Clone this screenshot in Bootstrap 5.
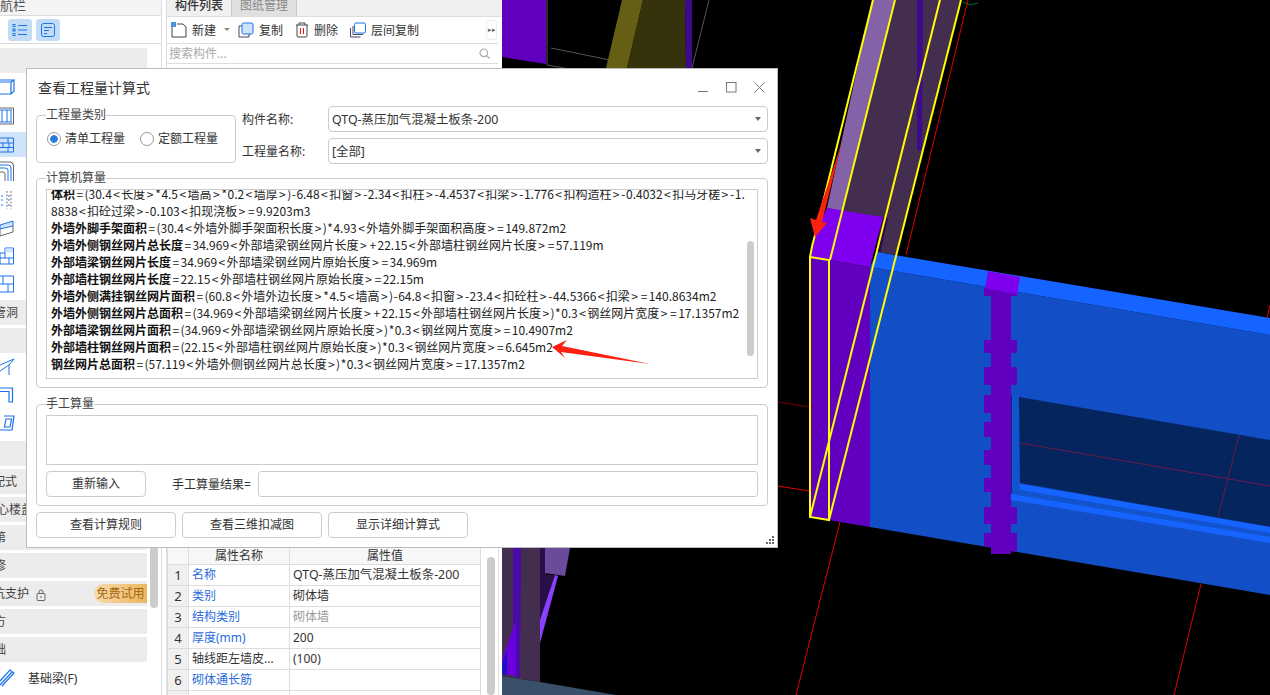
<!DOCTYPE html>
<html lang="zh-CN">
<head>
  <meta charset="UTF-8">
  <title>查看工程量计算式</title>
  <link href="https://cdn.jsdelivr.net/npm/bootstrap@5.3.0/dist/css/bootstrap.min.css" rel="stylesheet" />
  <style>
    html, body { height: 100%; }
    body { width: 1270px; height: 695px; overflow: hidden; background: #fff; color: #333; font: 12px/17px "Noto Sans", "Noto Sans CJK SC", sans-serif; position: relative; }

    /* left nav */
    .side-nav { width: 162px; height: 695px; border-right: 1px solid #ddd; overflow: hidden; flex: none; position: relative; }
    .nav-title { height: 16px; line-height: 10px; font-size: 13px; border-bottom: 1px solid #ddd; background: #f4f4f4; color: #555; overflow: hidden; }
    .nav-tools { height: 28px; border-bottom: 1px solid #ddd; padding: 3px 0 0 8px; gap: 4px; }
    .tool-on { width: 24px; height: 22px; background: #c3dcf5; border-radius: 3px; }
    .nav-list { width: 147px; padding-top: 4px; }
    .nav-group { height: 25px; line-height: 25px; background: #ececec; margin-bottom: 3px; white-space: nowrap; overflow: hidden; color: #444; position: relative; }
    .nav-item { height: 28px; display: flex; align-items: center; white-space: nowrap; }
    .nav-item.sel { background: #cfe4fb; height: 25px; margin: 2px 0 1px; }
    .nav-item svg { flex: none; }
    .item-label { margin-left: 13px; }
    .tight-1 { margin-bottom: 1px; }
    .tight-2 { margin-top: 2px; }
    .tight-3 { margin-bottom: 2px; }
    .cut-3 { margin-left: -3px; } .cut-6 { margin-left: -6px; } .cut-7 { margin-left: -7px; }
    .try-tag { position: absolute; right: 0; top: 3px; width: 53px; height: 19px; line-height: 19px; text-align: center; border-radius: 10px 0 0 10px; background: linear-gradient(90deg, #f7dcae, #edb660); color: #a5660f; }
    .nav-thumb { position: absolute; left: 150px; top: 400px; width: 8px; height: 208px; background: #ccc; border-radius: 4px; }

    /* component panel */
    .comp-panel { width: 336px; height: 695px; margin-left: 4px; flex: none; position: relative; border-left: 1px solid #ddd; }
    .comp-tabs { height: 17px; background: #f0f0f0; border-bottom: 1px solid #ddd; }
    .comp-tab { width: 65px; height: 16px; line-height: 12px; text-align: center; overflow: hidden; font-weight: 500; border-right: 1px solid #ccc; color: #333; }
    .comp-tab.off { background: #e0e0e0; color: #888; font-weight: 400; }
    .comp-tools { height: 27px; border-bottom: 1px solid #ddd; padding-left: 4px; width: 331px; position: relative; }
    .comp-tools span { margin-left: 5px; }
    .comp-more { position: absolute; left: 319px; top: 3px; width: 11px; height: 20px; border: 1px solid #eee; border-radius: 3px; color: #666; font-size: 7px; line-height: 18px; text-align: center; }
    .comp-search { height: 20px; width: 331px; border-bottom: 1px solid #ddd; color: #aaa; padding-left: 2px; line-height: 19px; }
    .comp-list { height: 482px; }
    .prop-table { width: 313px; margin: 0; table-layout: fixed; font-size: 12px; color: #333; border-color: #ddd; }
    .prop-table > :not(caption) > * > * { padding: 0 3px; height: 21px; line-height: 20px; box-shadow: none; white-space: nowrap; overflow: hidden; }
    .prop-table thead th { font-weight: 400; text-align: center; height: 18px; line-height: 16px; background: #f7f7f7; }
    .prop-table td.rn { background: #f0f0f0; text-align: center; font-size: 13px; }
    .prop-table td.pk { color: #2b6bdc; }
    .prop-table td.dim { color: #999; }
    .prop-table td.val-name { font-size: 12.4px; }
    .prop-thumb { position: absolute; left: 320px; top: 557px; width: 8px; height: 138px; background: #ccc; border-radius: 4px; }
    .panel-edge { position: absolute; left: 331px; top: 545px; width: 1px; height: 150px; background: #ddd; }

    .stage { width: 768px; height: 695px; flex: none; background: #000; display: block; }

    /* dialog */
    .calc-dlg { position: absolute; left: 26px; top: 68px; width: 752px; height: 480px; background: #fff; border: 1px solid #bbb; padding: 0 9px; }
    .dlg-head { height: 37px; padding-left: 2px; font-size: 14px; color: #333; }
    .win-btns { position: absolute; right: 12px; top: 13px; gap: 17px; }
    .calc-box { position: relative; border: 1px solid #ccc; border-radius: 4px; }
    .box-legend { position: absolute; left: 9px; top: -10px; background: #fff; line-height: 17px; padding: 0; color: #444; }
    .kind-box { width: 200px; height: 48px; margin-top: 9px; flex: none; padding: 0 0 0 10px; gap: 15px; }
    .radio-line { margin: 0; padding: 0; min-height: 0; gap: 4px; line-height: 16px; }
    .radio-line .form-check-input { float: none; margin: 0; width: 14px; height: 14px; border: 1px solid #999; background: #fff; box-shadow: none; flex: none; }
    .radio-line .form-check-input:checked { background: radial-gradient(circle, #2a7ae2 0 3.5px, #fff 4px); border-color: #999; }
    .radio-line label { color: #333; }
    .name-col { margin-left: 6px; flex: 1; gap: 6px; }
    .name-lab { width: 86px; flex: none; color: #333; }
    .dlg-select { height: 26px; padding: 1px 20px 0 3px; font-size: 12.4px; line-height: 24px; border: 1px solid #ccc; border-radius: 4px; color: #333; background-position: right 6px center; background-size: 6px 4px; background-image: url("data:image/svg+xml,%3Csvg xmlns='http://www.w3.org/2000/svg' viewBox='0 0 6 4'%3E%3Cpath d='M0 0h6L3 4z' fill='%23666'/%3E%3C/svg%3E"); font-family: inherit; box-shadow: none; }
    .auto-box { height: 210px; margin-top: 14px; padding: 10px 9px; }
    .formula-view { height: 190px; border: 1px solid #ccc; overflow: hidden; position: relative; padding: 0 4px; color: #222; white-space: nowrap; font-family: "Noto Sans CJK SC", sans-serif; }
    .formula-view p { margin: 0; height: 17px; line-height: 17px; }
    .formula-view p:first-child { margin-top: -5px; }
    .formula-view b { font-weight: 700; color: #111; }
    .sym-wide { margin: 0 1.4px; }
    .sym-thin { margin: 0 0.5px; }
    .formula-thumb { position: absolute; left: 700px; top: 51px; width: 7px; height: 115px; background: #ccc; border-radius: 4px; }
    .hand-box { height: 102px; margin-top: 16px; padding: 10px 9px; }
    .hand-area { height: 50px; border: 1px solid #ccc; border-radius: 0; resize: none; box-shadow: none; }
    .hand-row { margin-top: 6px; }
    .dlg-btn { height: 26px; padding: 0; flex: none; font-size: 12px; line-height: 24px; border: 1px solid #ccc; border-radius: 4px; background: #fff; color: #333; }
    .btn-reset { width: 100px; }
    .btn-foot { width: 140px; }
    .hand-lab { margin-left: 26px; width: 86px; flex: none; }
    .hand-input { height: 26px; padding: 0 4px; border: 1px solid #ccc; border-radius: 3px; box-shadow: none; font-size: 12px; }
    .foot-row { margin-top: 6px; gap: 6px; }
    .size-grip { position: absolute; right: 2px; bottom: 2px; }
    .mark-layer { position: absolute; left: 0; top: 0; pointer-events: none; }
  </style>
</head>
<body>
<div class="d-flex">

  <!-- left nav -->
  <aside class="side-nav">
    <div class="nav-title"><span>航栏</span></div>
    <div class="nav-tools d-flex">
      <div class="tool-on d-flex align-items-center justify-content-center">
        <svg width="16" height="14" viewBox="0 0 16 14" fill="none" stroke="#1a73e8"><path d="M6 2.5h9M6 7h9M6 11.5h9"/><rect x="1" y="1.5" width="2" height="2"/><rect x="1" y="6" width="2" height="2"/><rect x="1" y="10.5" width="2" height="2"/></svg>
      </div>
      <div class="tool-on d-flex align-items-center justify-content-center">
        <svg width="16" height="16" viewBox="0 0 16 16" fill="none" stroke="#1a73e8"><rect x="1.5" y="1.5" width="13" height="13" rx="2"/><path d="M4 5.5h8M4 8.5h5M4 11.5h3"/></svg>
      </div>
    </div>
    <div class="nav-list">
      <div class="nav-group tight-1"></div>
      <div class="nav-item"><svg width="15" height="20" viewBox="0 0 15 20" fill="none" stroke="#1a73e8" stroke-width="1.2"><path d="M0 4h11v12H0M11 4l3-2v11l-3 3M0 2h14"/></svg></div>
      <div class="nav-item"><svg width="15" height="20" viewBox="0 0 15 20" fill="none"><path d="M0 2h13.500v16H0" stroke="#666"/><path d="M2 4v12M7 4v12M11 4v12M0 4h12M0 16h12" stroke="#1a73e8"/></svg></div>
      <div class="nav-item sel"><svg width="15" height="20" viewBox="0 0 15 20" fill="none" stroke="#1a73e8"><path d="M0 3h13.500v14H0M0 8h13.500M0 12.500h13.500M8 3v5M3 8v4.500M9 8v4.500M8 12.500V17"/></svg></div>
      <div class="nav-item"><svg width="15" height="22" viewBox="0 0 15 22" fill="none"><path d="M0 1h10q3.500 0 3.500 4v15" stroke="#666"/><path d="M0 4h8q3 0 3 3v13M0 7h5q3 0 3 2v11" stroke="#1a73e8"/><path d="M0 11h3q2 0 2 2v7" stroke="#666"/></svg></div>
      <div class="nav-item"><svg width="15" height="20" viewBox="0 0 15 20" fill="none"><path d="M7 1v18M11 1v18" stroke="#777" stroke-dasharray="2 1.500"/><path d="M1 6h2M1 10h2M1 15h2M8 6h2M8 10h2M8 15h2" stroke="#1a73e8"/></svg></div>
      <div class="nav-item"><svg width="15" height="20" viewBox="0 0 15 20" fill="none"><path d="M0 7l13-4v5L0 11z" stroke="#1a73e8" fill="#cfe4fb"/><path d="M0 11v7l13-4V8" stroke="#666"/></svg></div>
      <div class="nav-item"><svg width="15" height="20" viewBox="0 0 15 20" fill="none" stroke="#1a73e8"><path d="M5 2h8.500v16H0V7h5zM0 12h13.500M5 7v5M9 12v6"/><rect x="5.500" y="2.500" width="7.500" height="4" fill="#cfe4fb" stroke="none"/></svg></div>
      <div class="nav-item"><svg width="15" height="20" viewBox="0 0 15 20" fill="none" stroke="#1a73e8"><path d="M0 2h13.500v16H0M0 10h13.500M8 10v8M3 2v8"/></svg></div>
      <div class="nav-group tight-2"><span class="cut-6 d-inline-block">管洞</span></div>
      <div class="nav-group mb-0"></div>
      <div class="nav-item"><svg width="15" height="20" viewBox="0 0 15 20" fill="none" stroke="#1a73e8"><path d="M0 8l14-6-5 6-9 6M9 8v10"/></svg></div>
      <div class="nav-item"><svg width="15" height="20" viewBox="0 0 15 20" fill="none" stroke="#1a73e8" stroke-width="1.200"><path d="M0 3h12.500v14H9V6.500H0"/></svg></div>
      <div class="nav-item"><svg width="15" height="20" viewBox="0 0 15 20" fill="none" stroke="#1a73e8" stroke-width="1.200"><path d="M4 3h10l-2 14H0M6 6l-1.500 8H10l1.500-8z"/></svg></div>
      <div class="nav-group tight-2 mt-1"></div>
      <div class="nav-group"><span class="cut-7 d-inline-block">配式</span></div>
      <div class="nav-group"><span class="cut-3 d-inline-block">心楼盖</span></div>
      <div class="nav-group"><span class="cut-6 d-inline-block">第</span></div>
      <div class="nav-group"><span class="cut-6 d-inline-block">修</span></div>
      <div class="nav-group"><span class="cut-7 d-inline-block">坑支护</span>
        <svg width="10" height="12" viewBox="0 0 10 12" fill="none" stroke="#666" class="ms-1"><rect x="1" y="4.500" width="8" height="7" rx="1"/><path d="M3 4.500V3a2 2 0 0 1 4 0v1.500M5 7v2"/></svg>
        <div class="try-tag">免费试用</div>
      </div>
      <div class="nav-group"><span class="cut-6 d-inline-block">方</span></div>
      <div class="nav-group tight-3"><span class="cut-6 d-inline-block">础</span></div>
      <div class="nav-item"><svg width="15" height="20" viewBox="0 0 15 20" fill="none" stroke="#1a73e8" stroke-width="1.200"><path d="M0 13L10 2l4 3L2 18M0 17L12 4"/></svg><span class="item-label">基础梁(F)</span></div>
    </div>
    <div class="nav-thumb"></div>
  </aside>

  <!-- component list + properties -->
  <section class="comp-panel">
    <div class="comp-tabs d-flex">
      <div class="comp-tab">构件列表</div>
      <div class="comp-tab off">图纸管理</div>
    </div>
    <div class="comp-tools d-flex align-items-center">
      <svg width="16" height="16" viewBox="0 0 16 16" fill="none" stroke="#444"><path d="M1 3v12h14V5l-3-3H6"/><rect x="0" y="0" width="5" height="5" fill="#4a90e2" stroke="none"/></svg>
      <span>新建</span>
      <svg class="ms-2" width="6" height="4" viewBox="0 0 6 4"><path d="M0 0h6L3 3z" fill="#888"/></svg>
      <svg class="ms-2" width="16" height="16" viewBox="0 0 16 16" fill="none" stroke="#446"><path d="M4 4H1v11h10v-3"/><rect x="4" y="1" width="11" height="11" rx="1.500" fill="#cfe4fb" stroke="#1a73e8"/></svg>
      <span>复制</span>
      <svg class="ms-2 ps-1" width="18" height="16" viewBox="0 0 14 16" fill="none" stroke="#444"><path d="M1 3h12M4 3V1h6v2M2 3v11q0 1 1 1h8q1 0 1-1V3"/><path d="M5.500 6v6M8.500 6v6" stroke="#e01010"/></svg>
      <span>删除</span>
      <svg class="ms-2 ps-1" width="20" height="16" viewBox="0 0 16 16" fill="none" stroke="#446"><path d="M0.500 6v9h10M3 4v8.500h10"/><rect x="4.500" y="1" width="11" height="10" rx="1.500" stroke="#1a73e8" fill="#fff"/></svg>
      <span>层间复制</span>
      <div class="comp-more">▸▸</div>
    </div>
    <div class="comp-search d-flex justify-content-between pe-2 align-items-center">
      <span>搜索构件...</span>
      <svg width="11" height="11" viewBox="0 0 11 11" fill="none" stroke="#aaa" stroke-width="1.200"><circle cx="4.800" cy="4.800" r="3.800"/><path d="M7.500 7.500L10.500 10.500"/></svg>
    </div>
    <div class="comp-list"></div>
    <table class="table table-bordered prop-table">
      <colgroup><col width="21"><col width="101"><col width="191"></colgroup>
      <thead><tr><th></th><th>属性名称</th><th>属性值</th></tr></thead>
      <tbody>
        <tr><td class="rn">1</td><td class="pk">名称</td><td class="val-name">QTQ-蒸压加气混凝土板条-200</td></tr>
        <tr><td class="rn">2</td><td class="pk">类别</td><td>砌体墙</td></tr>
        <tr><td class="rn">3</td><td class="pk">结构类别</td><td class="dim">砌体墙</td></tr>
        <tr><td class="rn">4</td><td class="pk">厚度(mm)</td><td>200</td></tr>
        <tr><td class="rn">5</td><td>轴线距左墙皮...</td><td>(100)</td></tr>
        <tr><td class="rn">6</td><td class="pk">砌体通长筋</td><td></td></tr>
        <tr><td class="rn"></td><td></td><td></td></tr>
      </tbody>
    </table>
    <div class="prop-thumb"></div>
    <div class="panel-edge"></div>
  </section>

  <!-- 3D view -->
  <svg class="stage" viewBox="502 0 768 695" xmlns="http://www.w3.org/2000/svg">
    <rect x="502" width="768" height="695" fill="#000"/>
    <polygon points="502,0 546,0 546,64 502,57" fill="#6200c0"/>
    <path d="M547 0V65L575 70M551 48L610 60M709 0L692 68" stroke="#555" fill="none"/>
    <polygon points="622,0 643,0 627,68 606,68" fill="#645f14"/>
    <polygon points="643,0 685,0 686,68 627,68" fill="#36330c"/>
    <polygon points="685,0 692,0 692,68 686,68" fill="#3d0a8c"/>

    <path d="M968 0L906 255" stroke="#e00000" fill="none"/>
    <path d="M963 2L970 5L978 3" stroke="#0a6a2a" fill="none"/>
    <polygon points="872,0 895,0 842,211 827,208" fill="#8462a8"/>
    <polygon points="895,0 960,0 897,255 876,252 882,217 842,211" fill="#432e50"/>
    <polygon points="917,0 923,0 922,150 917,150" fill="#3d0a8c"/>
    <polygon points="882,217 888,218 880,254 877,252" fill="#2a0a50"/>

    <polygon points="870,267 1270,335 1270,595 870,527" fill="#124fc6"/>
    <polygon points="877,252 1270,318 1270,335 870,267" fill="#1664ff"/>
    <polygon points="827,208 883,217 870,267 830,260 810,257 815,235" fill="#7f00ee"/>
    <polygon points="810,257 830,260 870,267 870,527 810,517" fill="#6200c0"/>

    <!-- pillar -->
    <polygon points="988,271 1020,277 1017,295 985,289" fill="#7f00ee"/>
    <path d="M991 295H1011V554H991z" fill="#6200c0"/>
    <path d="M984 288L1017 294V296H984zM984 340H1017V353H984zM984 367H1017V385H984zM984 395H1012V413H984zM984 422H1012V437H984zM984 450H1012V465H984zM984 478H1012V492H984zM984 507H1017V524H984zM984 533H1017V552L984 546z" fill="#6200c0"/>

    <!-- window -->
    <polygon points="1012,395 1020,397 1020,490 1012,494" fill="#1254ce"/>
    <path d="M1011.500 395V493" stroke="#0a2a70" fill="none"/>
    <polygon points="1019,397 1270,440 1270,527 1020,483" fill="#05255f"/>
    <polygon points="1020,484 1270,527 1270,533 1020,490" fill="#1664ff"/>
    <polygon points="1020,490 1270,533 1270,537 1011,494" fill="#1254ce"/>
    <polygon points="1011,494 1270,537 1270,543 1011,500" fill="#1664ff"/>
    <path d="M1020 443L1270 486M1239 435L1218 517" stroke="#6b1a4a" fill="none"/>

    <!-- selection outline -->
    <g fill="none" stroke="#ffff00" stroke-width="2">
      <path d="M873 0L815 235Q812 245 810 257V517L829 520V260L810 257"/>
      <path d="M895 0L830 260"/>
      <path d="M940 0L810 517"/>
      <path d="M961 0L829 520"/>
    </g>

    <!-- axis lines -->
    <g fill="none">
      <path d="M778 402L809 407" stroke="#7a0000"/>
      <path d="M778 486L809 491" stroke="#e00000"/>
      <path d="M840 522L796 695M1201 584L1174 695M1270 305L1267 318" stroke="#e00000"/>
    </g>

    <!-- bottom left -->
    <polygon points="502,548 540,548 540,682 502,676" fill="#432e50"/>
    <polygon points="513,548 521,548 520,678 513,676" fill="#4a0aa8"/>
    <polygon points="502,660 516,620 516,676 502,674" fill="#6a00dd"/>
    <polygon points="502,665 507,650 507,675 502,674" fill="#1a14c0"/>
    <polygon points="540,548 546,548 546,575 555,575 540,625" fill="#2a1048"/>
    <polygon points="545,548 570,548 565,576 545,573" fill="#6a4a9a"/>
    <polygon points="555,575 558,576 540,643 540,620" fill="#8a40ff"/>
    <polygon points="502,676 540,682 616,695 502,695" fill="#3a5068"/>
  </svg>
</div>

<!-- dialog -->
<div class="calc-dlg">
  <div class="dlg-head d-flex align-items-center">查看工程量计算式</div>
  <div class="win-btns d-flex">
    <svg width="11" height="11" viewBox="0 0 11 11" stroke="#777" fill="none"><path d="M0 9.500H10"/></svg>
    <svg width="11" height="11" viewBox="0 0 11 11" stroke="#777" fill="none"><rect x="0.500" y="0.500" width="9.500" height="9.500"/></svg>
    <svg width="11" height="11" viewBox="0 0 11 11" stroke="#777" fill="none"><path d="M0.500 0.500L10.500 10.500M10.500 0.500L0.500 10.500"/></svg>
  </div>

  <div class="d-flex">
    <div class="calc-box kind-box d-flex align-items-center">
      <span class="box-legend">工程量类别</span>
      <div class="form-check radio-line d-flex align-items-center">
        <input class="form-check-input" type="radio" name="kind" id="k1" checked>
        <label for="k1">清单工程量</label>
      </div>
      <div class="form-check radio-line d-flex align-items-center">
        <input class="form-check-input" type="radio" name="kind" id="k2">
        <label for="k2">定额工程量</label>
      </div>
    </div>
    <div class="name-col d-flex flex-column">
      <div class="d-flex align-items-center">
        <span class="name-lab">构件名称:</span>
        <select class="form-select dlg-select"><option>QTQ-蒸压加气混凝土板条-200</option></select>
      </div>
      <div class="d-flex align-items-center">
        <span class="name-lab">工程量名称:</span>
        <select class="form-select dlg-select"><option>[全部]</option></select>
      </div>
    </div>
  </div>

  <div class="calc-box auto-box">
    <span class="box-legend">计算机算量</span>
    <div class="formula-view" id="formulaView">
      <p><b>体积</b>=(30.4&lt;长度&gt;*4.5&lt;墙高&gt;*0.2&lt;墙厚&gt;)-6.48&lt;扣窗&gt;-2.34&lt;扣柱&gt;-4.4537&lt;扣梁&gt;-1.776&lt;扣构造柱&gt;-0.4032&lt;扣马牙槎&gt;-1.</p>
      <p>8838&lt;扣砼过梁&gt;-0.103&lt;扣现浇板&gt;=9.9203m3</p>
      <p><b>外墙外脚手架面积</b>=(30.4&lt;外墙外脚手架面积长度&gt;)*4.93&lt;外墙外脚手架面积高度&gt;=149.872m2</p>
      <p><b>外墙外侧钢丝网片总长度</b>=34.969&lt;外部墙梁钢丝网片长度&gt;+22.15&lt;外部墙柱钢丝网片长度&gt;=57.119m</p>
      <p><b>外部墙梁钢丝网片长度</b>=34.969&lt;外部墙梁钢丝网片原始长度&gt;=34.969m</p>
      <p><b>外部墙柱钢丝网片长度</b>=22.15&lt;外部墙柱钢丝网片原始长度&gt;=22.15m</p>
      <p><b>外墙外侧满挂钢丝网片面积</b>=(60.8&lt;外墙外边长度&gt;*4.5&lt;墙高&gt;)-64.8&lt;扣窗&gt;-23.4&lt;扣砼柱&gt;-44.5366&lt;扣梁&gt;=140.8634m2</p>
      <p><b>外墙外侧钢丝网片总面积</b>=(34.969&lt;外部墙梁钢丝网片长度&gt;+22.15&lt;外部墙柱钢丝网片长度&gt;)*0.3&lt;钢丝网片宽度&gt;=17.1357m2</p>
      <p><b>外部墙梁钢丝网片面积</b>=(34.969&lt;外部墙梁钢丝网片原始长度&gt;)*0.3&lt;钢丝网片宽度&gt;=10.4907m2</p>
      <p><b>外部墙柱钢丝网片面积</b>=(22.15&lt;外部墙柱钢丝网片原始长度&gt;)*0.3&lt;钢丝网片宽度&gt;=6.645m2</p>
      <p><b>钢丝网片总面积</b>=(57.119&lt;外墙外侧钢丝网片总长度&gt;)*0.3&lt;钢丝网片宽度&gt;=17.1357m2</p>
      <div class="formula-thumb"></div>
    </div>
  </div>

  <div class="calc-box hand-box">
    <span class="box-legend">手工算量</span>
    <textarea class="form-control hand-area"></textarea>
    <div class="hand-row d-flex align-items-center">
      <button class="btn dlg-btn btn-reset">重新输入</button>
      <span class="hand-lab">手工算量结果=</span>
      <input class="form-control hand-input" type="text">
    </div>
  </div>

  <div class="foot-row d-flex">
    <button class="btn dlg-btn btn-foot">查看计算规则</button>
    <button class="btn dlg-btn btn-foot">查看三维扣减图</button>
    <button class="btn dlg-btn btn-foot">显示详细计算式</button>
  </div>

  <svg class="size-grip" width="10" height="9" viewBox="0 0 10 9" fill="#666"><path d="M7 0h2v2H7zM4 3h2v2H4zM7 3h2v2H7zM1 6h2v2H1zM4 6h2v2H4zM7 6h2v2H7z"/></svg>
</div>

<!-- red annotation arrows -->
<svg class="mark-layer" width="1270" height="695" viewBox="0 0 1270 695">
  <polygon points="842,142 822,222 827,223 815,237 810,218 816,220" fill="#fc2010"/>
  <polygon points="552,347 567,340 562,346 650,364 561,352 565,358" fill="#fc2010"/>
</svg>

<script src="https://cdn.jsdelivr.net/npm/bootstrap@5.3.0/dist/js/bootstrap.bundle.min.js"></script>
<script>
  // the operators in the formula lines sit wider than the font's own advance
  document.querySelectorAll('#formulaView p').forEach(p => {
    p.innerHTML = p.innerHTML.replace(/&lt;|&gt;|=|\+|\*|-/g, s => {
      const cls = (s === '*' || s === '-') ? 'sym-thin' : 'sym-wide';
      return `<span class="${cls}">${s}</span>`;
    });
  });
</script>
</body>
</html>
